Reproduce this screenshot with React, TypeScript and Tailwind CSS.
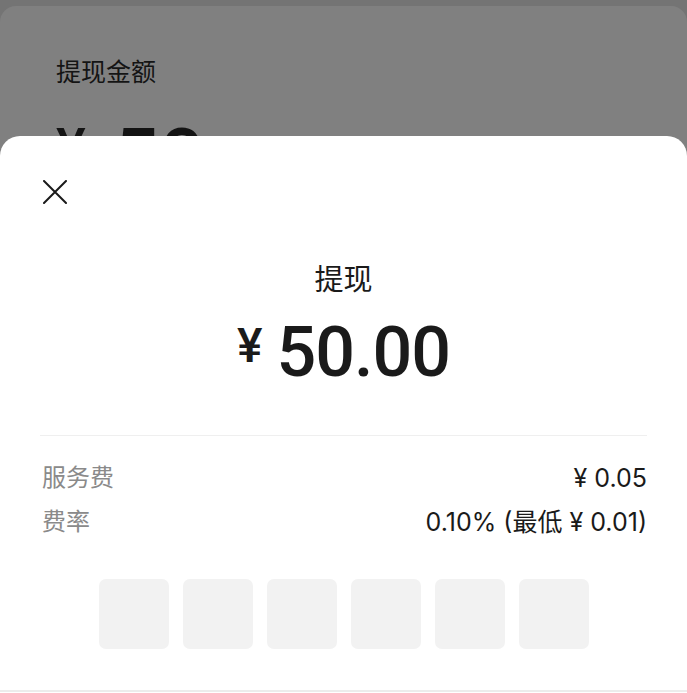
import React from "react";

const cjk = "font-['Roboto','Noto_Sans_CJK_SC',sans-serif]";
const num = "font-['Inter','Noto_Sans_CJK_SC',sans-serif]";

export default function App() {
  const boxes = [0, 1, 2, 3, 4, 5];
  return (
    <div className={`relative h-[693px] w-full overflow-hidden bg-[#747474] ${cjk}`}>
      {/* background page (dimmed) */}
      <div className="mt-[6px] h-[700px] rounded-t-[16px] bg-[#808080] pl-[56px] pt-[54px]">
        <div className="text-[25px] leading-none text-[#141414]">提现金额</div>
        <div className="mt-[33px] flex items-start font-medium text-[#141414]">
          <span className="mt-[3px] text-[56px] leading-none">¥</span>
          <span className="ml-[28px] text-[80px] leading-none">50</span>
        </div>
      </div>

      {/* bottom sheet */}
      <div className="absolute inset-x-0 bottom-0 top-[136px] flex flex-col rounded-t-[20px] bg-white">
        <div className="pl-[43px] pt-[44px]">
          <svg width="24" height="24" viewBox="0 0 24 24" fill="none">
            <path d="M1 1L23 23M23 1L1 23" stroke="#1a1a1a" strokeWidth="2" strokeLinecap="round" />
          </svg>
        </div>

        <div className="mt-[62px] text-center text-[29px] leading-none text-[#1a1a1a]">提现</div>

        <div className="mt-[22px] flex items-start justify-center font-medium text-[#1a1a1a]">
          <span className="mt-[5px] text-[48px] leading-none">¥</span>
          <span className="ml-[14px] text-[70px] leading-none tracking-[-1px]">50.00</span>
        </div>

        <div className="mx-[40px] mt-[48px] h-px bg-[#efefef]" />

        <div className="ml-[42px] mr-[40px] mt-[30px] flex items-center justify-between text-[24px] leading-[24px]">
          <span className="text-[#8a8a8a]">服务费</span>
          <span className={`${num} text-[25px] text-[#1a1a1a]`}>¥ 0.05</span>
        </div>
        <div className="ml-[42px] mr-[40px] mt-[20px] flex items-center justify-between text-[24px] leading-[24px]">
          <span className="text-[#8a8a8a]">费率</span>
          <span className={`${num} text-[25px] text-[#1a1a1a]`}>0.10% (最低 ¥ 0.01)</span>
        </div>

        <div className="mt-[45px] flex justify-center gap-[14px]">
          {boxes.map((b) => (
            <div key={b} className="h-[70px] w-[70px] rounded-[7px] bg-[#f2f2f2]" />
          ))}
        </div>

        <div className="mb-[1px] mt-auto h-[2px] bg-[#ececec]" />
      </div>
    </div>
  );
}
